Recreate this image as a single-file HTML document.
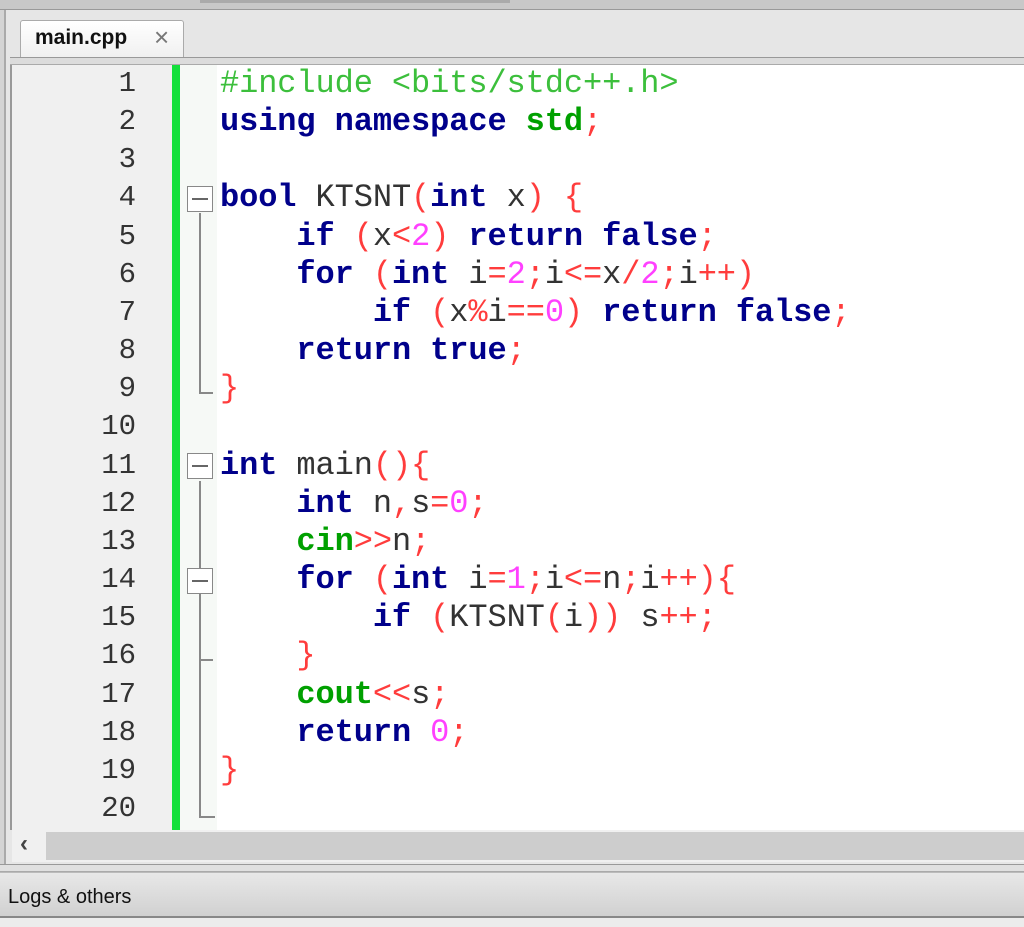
<!DOCTYPE html>
<html><head><meta charset="utf-8"><style>
*{margin:0;padding:0;box-sizing:border-box}
body{width:1024px;height:927px;overflow:hidden;background:#d4d4d4;font-family:"Liberation Sans",sans-serif;position:relative}
.abs{position:absolute}
.code{position:absolute;left:220px;top:65px;font-family:"Liberation Mono","Courier New",monospace;font-size:32px;line-height:38.16px;white-space:pre;color:#333;letter-spacing:-0.1px}
.nums{position:absolute;left:12px;width:124px;top:65px;font-family:"Liberation Mono",monospace;font-size:29px;line-height:38.16px;text-align:right;color:#333;white-space:pre}
.k{color:#00008b;font-weight:bold}
.g{color:#00a000;font-weight:bold}
.p{color:#3cbf3c}
.o{color:#ff3c3c}
.n{color:#ff40ff}
.fold{position:absolute;left:187px;width:26px;height:26px;border:1.5px solid #888;background:#fff}
.fold:after{content:"";position:absolute;left:4px;right:4px;top:11px;height:2px;background:#666}
.vl{position:absolute;left:199px;width:2px;background:#888}
.hl{position:absolute;left:199px;height:2px;background:#888}
</style></head><body>
<div class="abs" style="left:0;top:0;width:1024px;height:10px;background:#c8c8c8;border-bottom:1px solid #999"></div>
<div class="abs" style="left:200px;top:0;width:310px;height:3px;background:#aaa"></div>
<div class="abs" style="left:4px;top:10px;width:1020px;height:855px;background:#e6e6e6;border-left:2px solid #aaa"></div>
<div class="abs" style="left:20px;top:20px;width:164px;height:37px;background:linear-gradient(#fff,#f0f0f0);border:1px solid #aaa;border-bottom:none;border-radius:3px 3px 0 0"></div>
<div class="abs" style="left:35px;top:26px;font-size:21px;font-weight:bold;color:#111">main.cpp</div>
<div class="abs" style="left:154px;top:22px;font-size:26px;color:#777">×</div>
<div class="abs" style="left:10px;top:57px;width:1014px;height:8px;background:#dcdcdc;border-top:1px solid #999;border-bottom:1px solid #aaa"></div>
<div class="abs" style="left:10px;top:65px;width:1014px;height:765px;background:#fff;border-left:2px solid #999"></div>
<div class="abs" style="left:12px;top:65px;width:160px;height:765px;background:#f0f0f0"></div>
<div class="abs" style="left:172px;top:65px;width:8px;height:765px;background:#14e03c"></div>
<div class="abs" style="left:180px;top:65px;width:37px;height:765px;background:#f6f9f6"></div>
<div class="nums">1
2
3
4
5
6
7
8
9
10
11
12
13
14
15
16
17
18
19
20</div>
<div class="vl" style="top:213px;height:180px"></div>
<div class="hl" style="top:392px;width:14px"></div>
<div class="vl" style="top:481px;height:337px"></div>
<div class="hl" style="top:659px;width:14px"></div>
<div class="hl" style="top:816px;width:16px"></div>
<div class="fold" style="top:186px"></div>
<div class="fold" style="top:453px"></div>
<div class="fold" style="top:568px"></div>
<div class="code"><span class="p">#include &lt;bits/stdc++.h&gt;</span>
<span class="k">using namespace</span> <span class="g">std</span><span class="o">;</span>

<span class="k">bool</span> KTSNT<span class="o">(</span><span class="k">int</span> x<span class="o">)</span> <span class="o">{</span>
    <span class="k">if</span> <span class="o">(</span>x<span class="o">&lt;</span><span class="n">2</span><span class="o">)</span> <span class="k">return false</span><span class="o">;</span>
    <span class="k">for</span> <span class="o">(</span><span class="k">int</span> i<span class="o">=</span><span class="n">2</span><span class="o">;</span>i<span class="o">&lt;=</span>x<span class="o">/</span><span class="n">2</span><span class="o">;</span>i<span class="o">++)</span>
        <span class="k">if</span> <span class="o">(</span>x<span class="o">%</span>i<span class="o">==</span><span class="n">0</span><span class="o">)</span> <span class="k">return false</span><span class="o">;</span>
    <span class="k">return true</span><span class="o">;</span>
<span class="o">}</span>

<span class="k">int</span> main<span class="o">(){</span>
    <span class="k">int</span> n<span class="o">,</span>s<span class="o">=</span><span class="n">0</span><span class="o">;</span>
    <span class="g">cin</span><span class="o">&gt;&gt;</span>n<span class="o">;</span>
    <span class="k">for</span> <span class="o">(</span><span class="k">int</span> i<span class="o">=</span><span class="n">1</span><span class="o">;</span>i<span class="o">&lt;=</span>n<span class="o">;</span>i<span class="o">++){</span>
        <span class="k">if</span> <span class="o">(</span>KTSNT<span class="o">(</span>i<span class="o">))</span> s<span class="o">++;</span>
    <span class="o">}</span>
    <span class="g">cout</span><span class="o">&lt;&lt;</span>s<span class="o">;</span>
    <span class="k">return</span> <span class="n">0</span><span class="o">;</span>
<span class="o">}</span>
</div>
<div class="abs" style="left:12px;top:830px;width:1012px;height:32px;background:#f0f0f0"></div>
<div class="abs" style="left:46px;top:832px;width:978px;height:28px;background:#cdcdcd"></div>
<div class="abs" style="left:20px;top:830px;font-size:24px;color:#444;font-weight:bold">‹</div>
<div class="abs" style="left:0;top:864px;width:1024px;height:8px;background:#e0e0e0;border-top:1px solid #999;border-bottom:1px solid #aaa"></div>
<div class="abs" style="left:0;top:872px;width:1024px;height:45px;background:linear-gradient(#e8e8e8,#d0d0d0);border-top:1px solid #bbb"></div>
<div class="abs" style="left:8px;top:886px;font-size:20px;color:#111">Logs &amp; others</div>
<div class="abs" style="left:0;top:916px;width:1024px;height:11px;background:#ececec;border-top:2px solid #888"></div>
</body></html>
